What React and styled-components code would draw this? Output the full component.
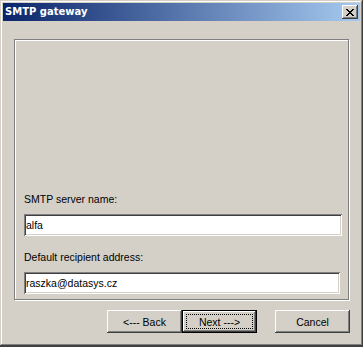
import React from "react";
import styled, { createGlobalStyle } from "styled-components";

const GlobalStyle = createGlobalStyle`
  html, body { margin: 0; padding: 0; background: #404040; }
  body { width: 363px; height: 347px; overflow: hidden; }
  #root { width: 363px; height: 347px; }
`;

const Window = styled.div`
  box-sizing: border-box;
  width: 363px;
  height: 346px;
  padding: 3px;
  background: #d4d0c8;
  box-shadow: inset -1px -1px #404040, inset 1px 1px #d4d0c8,
    inset -2px -2px #808080, inset 2px 2px #ffffff;
  display: flex;
  flex-direction: column;
  font-family: "Liberation Sans", Arial, sans-serif;
  font-size: 10.5px;
  color: #000;
`;

const TitleBar = styled.div`
  height: 18px;
  margin-bottom: 1px;
  padding: 0 2px;
  display: flex;
  align-items: center;
  justify-content: space-between;
  background: linear-gradient(to right, #0a246a, #a6caf0);
`;

const TitleText = styled.span`
  font-family: "DejaVu Sans", Verdana, sans-serif;
  font-weight: bold;
  font-size: 10px;
  color: #ffffff;
  line-height: 18px;
`;

const CaptionButton = styled.div`
  box-sizing: border-box;
  width: 16px;
  height: 14px;
  background: #d4d0c8;
  box-shadow: inset -1px -1px #404040, inset 1px 1px #ffffff,
    inset -2px -2px #808080, inset 2px 2px #d4d0c8;
  display: flex;
  align-items: center;
  justify-content: center;
`;

const Client = styled.div`
  flex: 1;
  display: flex;
  flex-direction: column;
`;

const Frame = styled.div`
  box-sizing: border-box;
  width: 335px;
  height: 261px;
  margin: 17px 0 0 11px;
  border: 1px solid #808080;
  box-shadow: inset 1px 1px #ffffff, 1px 1px #ffffff;
  display: flex;
  flex-direction: column;
  justify-content: flex-end;
  gap: 15px;
  padding: 0 0 5px 9px;
`;

const Field = styled.div`
  display: flex;
  flex-direction: column;
  gap: 8px;
`;

const Label = styled.label`
  height: 13px;
  line-height: 13px;
  white-space: nowrap;
`;

const TextInput = styled.input`
  box-sizing: border-box;
  width: ${(p) => p.$w}px;
  height: 22px;
  margin: 0;
  padding: 0 0 0 1px;
  border: none;
  outline: none;
  background: #ffffff;
  font-family: "Liberation Sans", Arial, sans-serif;
  font-size: 10.5px;
  color: #000;
  box-shadow: inset 1px 1px #808080, inset -1px -1px #ffffff,
    inset 2px 2px #404040, inset -2px -2px #d4d0c8;
  padding-left: 2px;
`;

const ButtonRow = styled.div`
  display: flex;
  justify-content: flex-end;
  margin-top: 10px;
  padding-right: 10px;
`;

const Button = styled.button`
  position: relative;
  box-sizing: border-box;
  width: 75px;
  height: 23px;
  margin: 0 0 0 ${(p) => p.$gap || 0}px;
  padding: 0;
  background: #d4d0c8;
  font-family: "Liberation Sans", Arial, sans-serif;
  font-size: 10.5px;
  color: #000;
  border: ${(p) => (p.$default ? "1px solid #000000" : "none")};
  box-shadow: inset -1px -1px #404040, inset 1px 1px #ffffff,
    inset -2px -2px #808080, inset 2px 2px #d4d0c8;
  outline: none;
  &::after {
    content: "";
    display: ${(p) => (p.$default ? "block" : "none")};
    position: absolute;
    inset: 3px 3px 3px 3px;
    border: 1px dotted #000;
  }
`;

export default function App() {
  return (
    <>
      <GlobalStyle />
      <Window>
        <TitleBar>
          <TitleText>SMTP gateway</TitleText>
          <CaptionButton>
            <svg width="8" height="7" viewBox="0 0 8 7">
              <path
                d="M0 0h2v1h1v1h2V1h1V0h2v1H7v1H6v1H5v1h1v1h1v1h1v1H6V6H5V5H3v1H2v1H0V6h1V5h1V4h1V3H2V2H1V1H0z"
                fill="#000"
              />
            </svg>
          </CaptionButton>
        </TitleBar>
        <Client>
          <Frame>
            <Field>
              <Label>SMTP server name:</Label>
              <TextInput $w={318} defaultValue="alfa" />
            </Field>
            <Field>
              <Label>Default recipient address:</Label>
              <TextInput $w={316} defaultValue="raszka@datasys.cz" />
            </Field>
          </Frame>
          <ButtonRow>
            <Button>&lt;--- Back</Button>
            <Button $default>Next ---&gt;</Button>
            <Button $gap={18}>Cancel</Button>
          </ButtonRow>
        </Client>
      </Window>
    </>
  );
}
